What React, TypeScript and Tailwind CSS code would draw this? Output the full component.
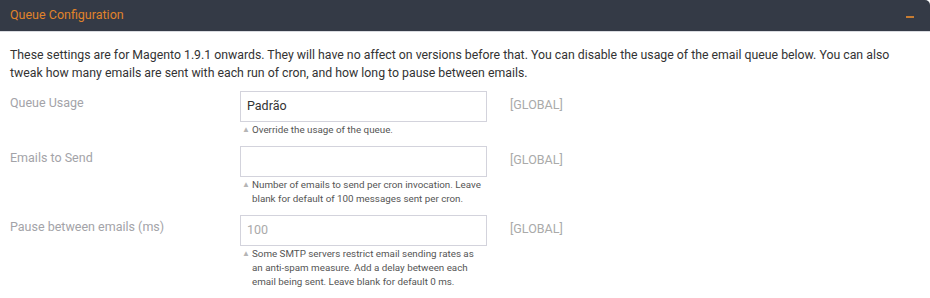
const rows = [
  {
    label: 'Queue Usage',
    value: 'Padrão',
    placeholder: '',
    hint: ['Override the usage of the queue.'],
  },
  {
    label: 'Emails to Send',
    value: '',
    placeholder: '',
    hint: ['Number of emails to send per cron invocation. Leave', 'blank for default of 100 messages sent per cron.'],
  },
  {
    label: 'Pause between emails (ms)',
    value: '',
    placeholder: '100',
    hint: [
      'Some SMTP servers restrict email sending rates as',
      'an anti-spam measure. Add a delay between each',
      'email being sent. Leave blank for default 0 ms.',
    ],
  },
];

const App = () => {
  return (
    <div className="w-[930px] h-[298px] bg-white overflow-hidden font-['Roboto',sans-serif]">
      <div className="flex items-center justify-between h-[31px] bg-[#343a46] rounded-tr-[5px] border-b border-[#d9dbe0] box-content px-[10px]">
        <span className="text-[12.5px] text-[#e0832a]">Queue Configuration</span>
        <span className="block w-[8px] h-[2px] bg-[#c77c32] mr-[6px] mt-[3px]" />
      </div>
      <div className="px-[10px] pt-[14px]">
        <p className="text-[12.3px] leading-[18px] text-[#333333]">
          These settings are for Magento 1.9.1 onwards. They will have no affect on versions before that. You can disable the usage of the email queue below. You can also tweak how many emails are sent with each run of cron, and how long to pause between emails.
        </p>
        <div className="flex flex-col gap-[9px] mt-[9px]">
          {rows.map((row) => (
            <div key={row.label} className="flex">
              <div className="w-[230px] pt-[3px] text-[12.5px] leading-[18px] text-[#a3a3a8]">{row.label}</div>
              <div className="w-[247px]">
                <div className="h-[31px] border border-[#d3d3dc] flex items-center px-[6px] text-[12.5px]">
                  {row.value ? (
                    <span className="text-[#333333]">{row.value}</span>
                  ) : (
                    <span className="text-[#aaaaaa]">{row.placeholder}</span>
                  )}
                </div>
                <div className="relative pl-[12px] pt-[1px] text-[9.8px] leading-[14px] text-[#555555]">
                  <span className="absolute left-[2px] top-[1px] text-[8px] text-[#b5b5b5]">▲</span>
                  {row.hint.map((line) => (
                    <div key={line} className="whitespace-nowrap">{line}</div>
                  ))}
                </div>
              </div>
              <div className="pl-[23px] pt-[5px] text-[12.5px] leading-[18px] text-[#aaaaaa]">[GLOBAL]</div>
            </div>
          ))}
        </div>
      </div>
    </div>
  );
};

export default App;
